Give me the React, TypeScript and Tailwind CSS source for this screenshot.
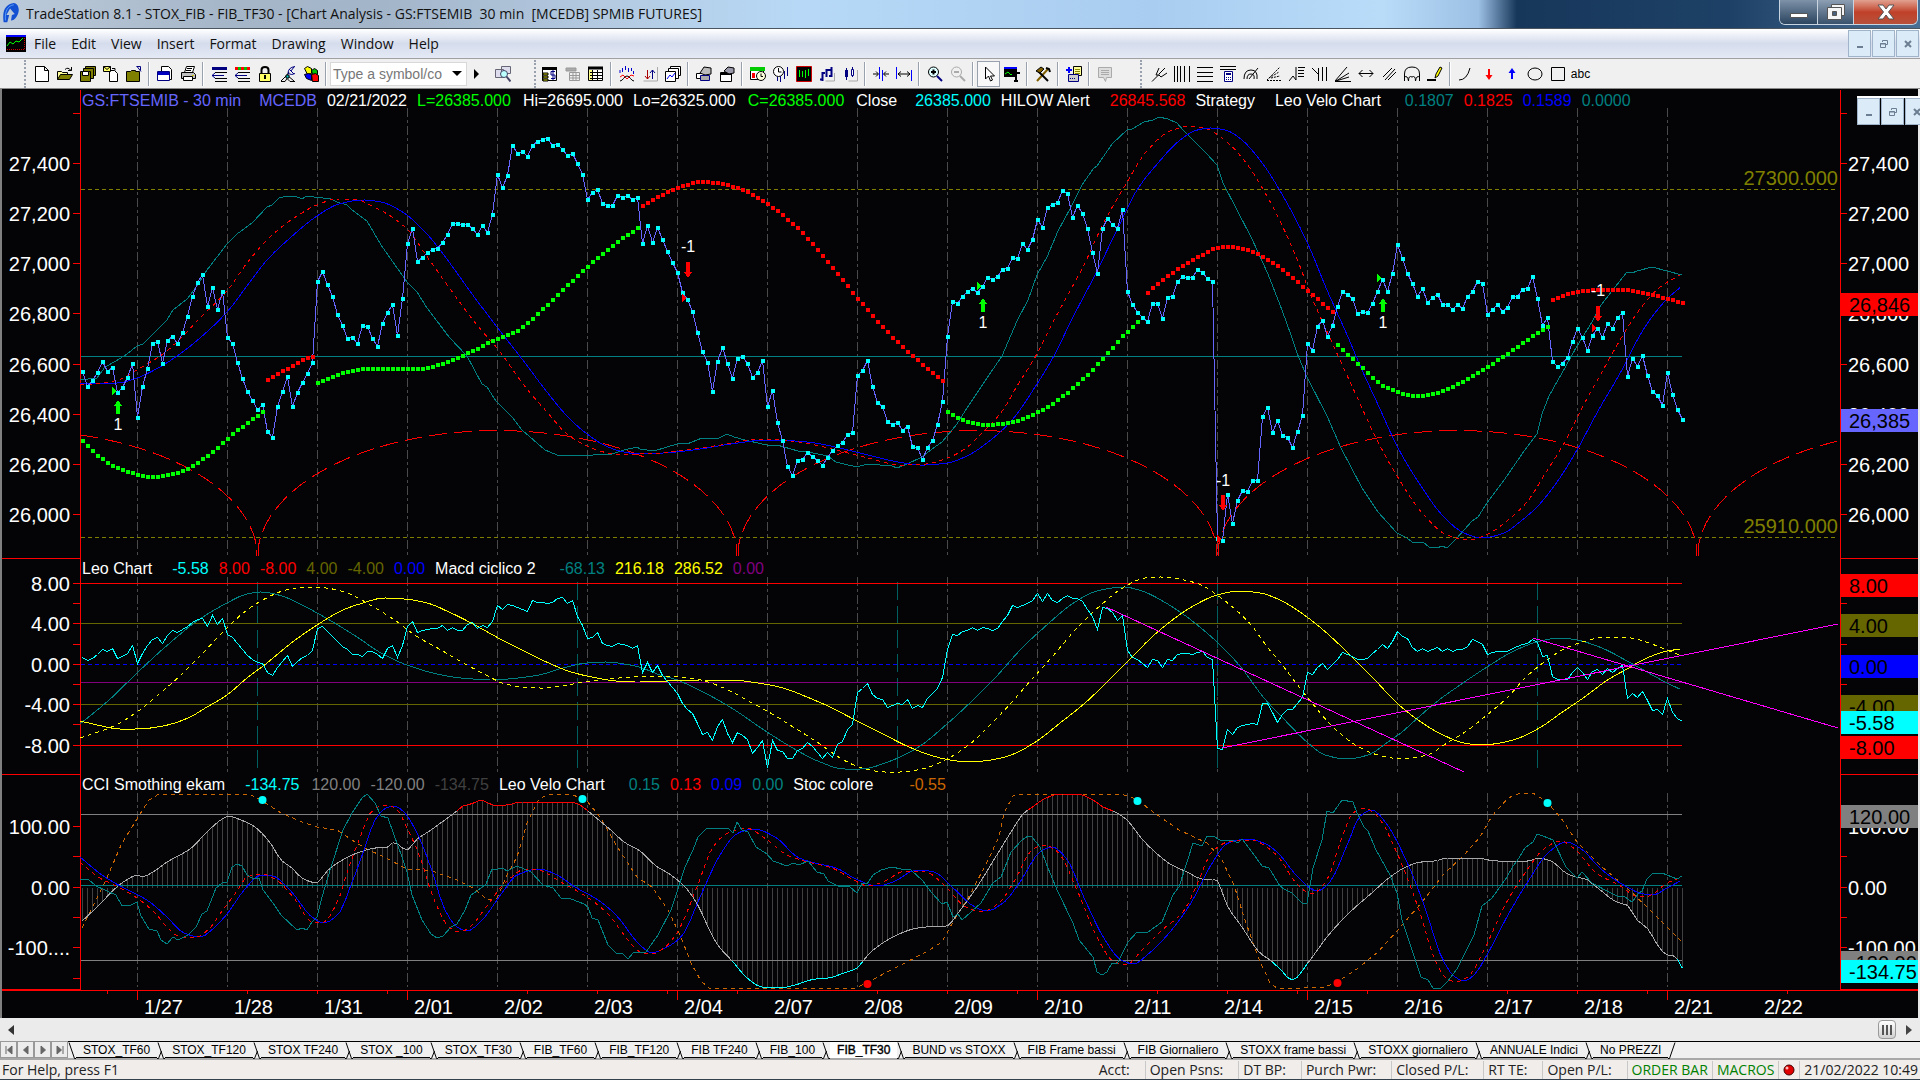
import React from "react";

type Pt = [number, number];

/* ---------- numeric helpers ---------- */

const FIRST_X = 82.5;
const STEP = 5;

const pairs = (flat: number[]): Pt[] => {
  const out: Pt[] = [];
  for (let i = 0; i + 1 < flat.length; i += 2) out.push([flat[i], flat[i + 1]]);
  return out;
};

const toPath = (pts: Pt[]) => "M" + pts.map(([x, y]) => `${x.toFixed(1)},${y.toFixed(1)}`).join("L");

const barPath = (ys: number[]) => toPath(ys.map((y, i) => [FIRST_X + i * STEP, y + 0.5] as Pt));

/* Monotone cubic interpolation through knots, sampled every `step` pixels. */
const sample = (flat: number[], step = STEP, start?: number): Pt[] => {
  const p = pairs(flat);
  const n = p.length;
  const d: number[] = [];
  for (let i = 0; i < n - 1; i++) d.push((p[i + 1][1] - p[i][1]) / (p[i + 1][0] - p[i][0]));
  const m: number[] = [d[0]];
  for (let i = 1; i < n - 1; i++) m.push(d[i - 1] * d[i] <= 0 ? 0 : (2 * d[i - 1] * d[i]) / (d[i - 1] + d[i]));
  m.push(d[n - 2]);
  const out: Pt[] = [];
  let k = 0;
  for (let x = start ?? p[0][0]; x <= p[n - 1][0] + 0.01; x += step) {
    while (k < n - 2 && x > p[k + 1][0]) k++;
    const h = p[k + 1][0] - p[k][0];
    const t = (x - p[k][0]) / h;
    const t2 = t * t;
    const t3 = t2 * t;
    out.push([
      x,
      (2 * t3 - 3 * t2 + 1) * p[k][1] + (t3 - 2 * t2 + t) * h * m[k] + (-2 * t3 + 3 * t2) * p[k + 1][1] + (t3 - t2) * h * m[k + 1],
    ]);
  }
  return out;
};

/* ---------- series ---------- */

const price = [
  371,386,380,372,361,371,367,392,387,377,363,417,386,368,343,341,363,340,336,343,332,316,296,282,274,306,287,309,291,337,
  343,362,378,391,400,409,404,431,437,406,391,376,406,392,382,373,362,281,271,284,296,314,325,338,337,343,325,326,338,346,
  323,312,304,335,298,243,228,261,257,252,249,248,242,234,223,223,224,224,228,234,225,232,214,174,187,175,145,153,151,156,
  145,141,139,138,145,144,149,155,153,163,174,199,192,189,203,205,205,195,197,195,199,197,243,225,242,227,239,251,262,272,
  292,299,311,332,351,362,391,361,347,363,378,358,356,363,377,372,360,406,390,422,440,466,475,460,459,452,456,460,465,457,
  450,445,442,434,432,375,370,360,386,402,406,421,424,422,430,426,446,447,459,447,440,424,401,336,301,303,296,291,288,292,
  286,277,279,276,269,268,257,258,243,249,239,219,227,207,204,202,190,193,217,205,213,228,252,273,228,218,224,228,209,291,
  304,312,317,321,303,303,318,297,296,281,276,277,277,269,272,278,281,538,540,494,523,500,490,491,480,480,416,407,432,420,
  435,437,447,431,415,343,350,326,320,336,325,306,291,294,298,313,311,312,303,291,279,291,273,244,258,273,283,296,288,302,
  297,294,304,304,309,304,308,296,291,281,283,314,309,304,311,307,296,296,289,288,276,298,325,317,361,366,363,357,341,328,
  337,350,335,328,337,323,328,317,312,376,358,366,355,375,391,395,405,372,394,409,419,
];

const leo = [
  657,660,658,654,649,651,648,658,656,653,645,663,653,645,639,637,643,635,630,632,629,626,622,619,618,626,615,624,618,634,
  637,643,649,655,659,662,663,672,675,667,661,655,666,661,657,655,650,628,626,631,636,641,646,649,654,654,656,651,651,654,
  658,648,645,657,645,626,621,632,630,629,628,628,625,630,627,630,630,624,622,628,625,627,621,605,609,604,605,607,609,611,
  600,602,602,603,602,598,597,603,600,616,625,638,637,632,643,645,646,643,644,645,648,645,672,662,672,665,675,681,687,693,
  703,709,713,723,734,732,740,726,719,733,742,732,735,739,753,747,740,767,740,750,751,758,758,750,748,742,746,752,758,752,
  757,744,741,729,724,692,688,683,694,698,699,707,705,703,704,699,708,705,707,698,693,688,677,649,634,635,631,630,627,630,
  627,628,630,628,621,615,605,607,605,603,600,593,601,593,600,602,598,595,598,598,601,609,616,629,607,608,612,620,615,650,
  657,659,663,667,659,660,667,659,660,654,653,653,654,652,651,657,659,748,749,729,734,727,725,724,723,724,703,703,712,722,
  714,709,709,703,697,672,674,667,663,669,664,659,652,654,656,659,659,658,653,649,644,648,641,631,636,638,647,651,648,651,
  649,647,651,648,651,649,649,646,639,641,644,654,652,651,651,651,648,646,644,643,639,642,656,655,676,679,679,679,672,667,
  672,679,671,669,674,668,672,668,665,698,693,697,691,700,710,709,714,698,712,718,721,
];

const hilow: { color: string; start: number; knots: number[] }[] = [
  { color: "#00ff00", start: 82.5, knots: [82,441,102,459,122,470,152,477,177,473,197,463,217,448,227,439,242,427,263,412] },
  { color: "#ff0000", start: 267.5, knots: [267,380,287,369,312,357,313,357] },
  { color: "#00ff00", start: 317.5, knots: [317,383,347,372,367,369,417,369,442,364,462,356,497,339,517,331,547,305,587,267,612,246,638,228] },
  { color: "#ff0000", start: 642.5, knots: [642,206,662,195,677,188,702,182,717,183,737,188,767,204,797,228,827,261,857,298,892,337,917,360,943,381] },
  { color: "#00ff00", start: 947.5, knots: [947,412,962,420,987,425,1012,422,1042,410,1067,393,1087,375,1107,354,1122,337,1138,322] },
  { color: "#ff0000", start: 1147.5, knots: [1147,293,1172,273,1202,255,1217,248,1232,247,1247,250,1277,266,1297,282,1317,299,1333,312] },
  { color: "#00ff00", start: 1337.5, knots: [1337,345,1362,368,1387,388,1417,396,1437,393,1462,382,1487,367,1507,354,1527,340,1548,327] },
  { color: "#ff0000", start: 1552.5, knots: [1552,300,1572,293,1597,290,1622,290,1647,294,1667,299,1683,303] },
];

const veloTeal = [
  80,380,97,378,105,367,116,361,127,354,137,346,143,344,152,335,167,320,173,310,187,299,197,286,207,270,227,244,237,234,252,223,
  267,207,272,205,279,198,287,196,295,196,302,199,307,196,314,197,331,199,337,202,347,205,352,210,367,221,381,245,407,282,417,292,
  427,308,437,321,449,337,467,356,482,384,487,387,496,401,512,417,522,430,545,450,557,455,567,456,576,455,587,456,600,454,612,454,
  624,450,637,447,640,449,654,451,677,444,682,443,687,444,702,438,717,439,727,434,734,437,745,440,762,444,772,446,777,445,798,451,
  808,452,818,454,828,456,836,462,844,464,857,467,867,464,892,466,897,468,907,464,922,457,932,449,942,442,957,424,967,408,987,378,
  1002,356,1017,321,1028,300,1037,275,1047,257,1058,231,1070,209,1077,195,1082,185,1093,169,1097,166,1112,144,1127,130,1132,129,
  1144,122,1153,120,1159,117,1168,119,1177,123,1183,130,1197,144,1207,154,1217,165,1223,183,1236,208,1252,239,1268,274,1282,310,
  1291,335,1297,353,1307,377,1327,416,1341,448,1362,488,1378,512,1397,533,1407,538,1412,542,1423,542,1429,547,1437,548,1442,546,
  1447,548,1456,539,1472,521,1478,517,1487,503,1507,476,1522,454,1537,434,1542,414,1549,396,1566,366,1577,346,1587,330,1592,322,
  1601,305,1612,291,1627,272,1632,273,1637,271,1652,267,1667,271,1682,275,
];
const veloRed = [
  80,385,102,383,118,380,135,371,163,354,180,339,197,321,227,291,247,263,269,238,294,218,317,205,337,199,355,199,372,206,392,217,
  408,230,428,258,453,293,477,325,497,348,527,389,547,412,567,434,587,446,608,453,628,455,639,454,660,453,685,450,721,445,742,441,
  762,439,791,441,815,445,840,451,868,458,901,465,926,464,950,457,966,448,987,428,1003,410,1017,386,1037,354,1054,320,1064,302,
  1085,263,1103,224,1126,184,1146,152,1170,131,1191,126,1207,129,1227,142,1247,164,1264,191,1279,219,1297,259,1312,298,1330,338,
  1357,397,1376,438,1397,476,1423,514,1447,535,1468,540,1488,534,1508,520,1527,502,1545,474,1566,440,1582,408,1602,372,1623,335,
  1643,305,1660,287,1682,274,
];
const veloBlue = [
  80,383,98,384,118,383,137,378,158,368,177,356,200,338,227,312,247,286,267,260,290,238,317,216,339,204,363,200,381,202,404,213,
  427,234,449,262,472,294,497,327,522,359,547,392,567,416,587,434,608,447,624,452,639,454,664,453,693,450,738,443,766,440,795,441,
  815,443,848,450,868,455,893,461,922,465,947,463,967,456,987,443,1012,420,1037,384,1055,354,1071,321,1095,275,1117,230,1137,190,
  1158,163,1179,141,1197,130,1212,128,1228,131,1242,140,1260,160,1279,189,1307,242,1327,290,1348,337,1362,370,1380,409,1397,446,
  1419,483,1443,516,1464,533,1482,538,1504,533,1521,521,1537,507,1557,482,1577,450,1598,411,1623,368,1635,344,1649,321,1667,299,1682,286,
];

const macdTeal = [
  80,724,108,701,137,673,163,649,197,621,227,603,247,594,262,592,282,596,302,605,326,618,357,637,381,653,407,665,437,674,461,678,
  492,680,518,678,539,675,563,668,587,663,608,662,624,664,639,667,660,675,677,680,701,691,730,707,767,732,798,751,820,762,844,769,
  862,769,885,763,917,748,947,724,975,698,995,678,1022,648,1048,624,1072,604,1097,591,1124,587,1142,591,1166,603,1191,620,1217,642,
  1240,666,1264,698,1280,715,1307,742,1325,755,1347,759,1368,755,1388,742,1402,732,1421,715,1439,700,1460,685,1487,667,1512,652,
  1537,642,1560,638,1577,640,1602,648,1627,661,1647,672,1667,683,1682,690,
];
const macdYellow = [
  80,721,102,726,118,729,137,729,163,726,188,718,207,707,227,695,247,678,267,663,290,644,317,625,343,610,363,603,384,598,404,599,
  427,603,449,612,473,624,502,640,530,654,551,664,571,672,592,677,616,681,637,682,668,681,701,680,730,680,758,683,783,688,807,697,
  832,708,857,721,885,735,909,747,930,755,950,760,970,762,991,760,1011,755,1037,741,1060,723,1085,703,1107,682,1130,659,1152,637,
  1175,618,1195,605,1217,595,1240,591,1260,593,1280,600,1307,617,1329,635,1347,652,1374,679,1398,704,1421,722,1443,735,1464,743,
  1482,745,1500,743,1519,738,1541,727,1561,713,1586,696,1606,681,1627,669,1647,658,1667,651,1682,649,
];
const macdDash = [
  80,738,98,732,114,726,137,712,158,695,180,676,200,656,222,633,242,614,261,601,286,590,307,587,326,588,347,593,372,606,396,621,
  416,636,441,650,465,664,490,677,502,683,522,687,543,688,567,685,584,682,608,679,632,677,660,676,681,677,701,680,726,689,750,702,
  767,711,798,730,820,744,840,758,862,768,885,772,901,772,926,768,947,759,970,744,991,724,1011,703,1032,679,1052,657,1077,628,
  1101,605,1121,589,1145,578,1162,577,1179,579,1199,584,1217,595,1236,610,1252,626,1268,648,1280,662,1296,683,1312,703,1333,727,
  1357,746,1378,755,1402,759,1427,755,1447,743,1468,730,1487,715,1508,697,1527,676,1547,660,1566,648,1586,641,1606,637,1631,638,
  1649,643,1667,650,1682,656,
];

const cci = [
  80,923,98,906,118,886,128,879,137,875,142,877,153,872,167,862,190,849,207,832,222,819,228,816,241,820,255,827,271,844,281,860,
  292,868,302,878,317,883,326,872,339,862,357,853,375,848,388,847,394,842,404,849,407,850,417,839,428,832,442,822,457,811,463,806,
  471,804,482,800,490,804,497,806,512,804,520,802,571,802,580,805,588,811,600,821,612,831,624,842,640,851,656,866,668,873,685,887,
  699,907,707,925,717,944,734,963,746,977,762,987,779,988,795,985,815,979,828,978,844,973,857,968,867,956,877,947,893,937,913,929,
  926,927,947,926,958,913,977,887,995,858,1011,832,1024,813,1034,806,1042,800,1060,794,1077,794,1093,800,1103,807,1113,811,1126,819,
  1142,839,1155,852,1170,864,1187,872,1202,879,1217,880,1222,892,1228,907,1242,927,1260,953,1270,960,1280,969,1292,980,1310,960,
  1327,937,1347,915,1374,891,1390,877,1408,866,1421,862,1435,861,1447,858,1476,858,1496,861,1529,861,1538,858,1551,861,1566,873,
  1576,877,1586,879,1594,885,1619,903,1627,905,1637,920,1647,928,1659,947,1667,955,1673,955,1683,969,
];
const stoc = [
  82,928,90,912,106,880,122,843,137,819,149,800,159,794,249,794,261,800,281,813,302,822,317,827,337,830,355,842,367,849,384,857,
  407,869,432,871,457,880,473,888,488,900,497,898,506,877,517,857,527,823,539,799,549,794,571,794,587,801,600,817,616,845,637,877,
  652,887,668,910,681,937,691,963,701,981,709,988,856,988,868,982,893,969,926,952,942,942,954,920,970,895,987,862,999,837,1004,813,
  1013,796,1019,794,1121,794,1136,799,1156,814,1179,830,1207,843,1221,858,1234,885,1244,917,1258,957,1270,983,1277,988,1304,988,
  1325,987,1337,982,1357,969,1378,952,1397,931,1423,901,1443,875,1464,855,1480,837,1492,816,1508,798,1521,793,1533,793,1547,802,
  1561,818,1577,842,1602,867,1627,888,1647,907,1667,927,1682,942,
];
const fastTeal = [
  80,880,88,879,96,886,116,895,122,906,131,905,137,902,141,916,149,929,157,931,161,940,167,944,173,937,178,940,188,935,196,927,
  202,914,207,911,216,888,222,883,227,882,232,867,237,864,242,866,247,875,252,878,259,878,263,890,273,903,281,915,297,930,302,928,
  307,930,312,922,317,917,322,897,331,867,343,830,352,813,362,798,367,794,375,803,381,816,388,818,394,835,402,857,407,872,412,895,
  422,920,431,934,437,938,443,936,451,927,457,924,465,910,471,895,477,891,486,884,492,869,498,869,503,868,507,871,517,866,531,872,
  543,885,553,888,561,898,571,899,584,904,588,907,592,918,598,920,608,945,616,953,622,953,628,959,633,953,646,952,658,935,671,910,
  677,892,685,867,693,850,698,837,707,828,728,828,733,833,737,822,742,830,748,832,756,847,767,854,773,861,787,866,793,863,799,865,
  808,861,817,872,824,874,828,881,838,886,850,887,857,893,862,883,867,884,873,875,881,870,892,867,901,869,911,870,922,880,932,893,
  942,904,947,902,953,917,958,914,962,920,971,912,981,903,993,883,1001,877,1011,852,1022,840,1028,836,1032,837,1040,847,1048,868,
  1058,892,1073,923,1079,940,1093,957,1097,972,1102,975,1107,972,1112,963,1117,964,1128,942,1137,932,1148,932,1162,922,1173,895,
  1179,887,1187,862,1193,843,1202,846,1207,836,1213,836,1220,840,1232,840,1238,843,1242,839,1252,852,1262,866,1269,868,1280,886,
  1284,889,1292,893,1302,903,1307,903,1313,868,1322,840,1327,811,1333,813,1342,800,1353,802,1357,813,1364,827,1368,831,1376,850,
  1390,875,1397,893,1402,920,1413,953,1421,977,1428,980,1433,988,1441,988,1447,982,1457,969,1474,935,1482,906,1492,898,1507,877,
  1513,866,1517,861,1525,848,1533,842,1537,834,1543,836,1553,840,1566,867,1577,878,1582,872,1592,883,1609,892,1619,897,1624,896,
  1632,902,1639,893,1642,891,1647,879,1652,874,1662,873,1677,879,1682,876,
];
const fastRed = [
  80,862,98,877,118,887,137,898,155,913,167,927,180,937,194,938,208,930,222,911,237,891,247,877,263,874,275,879,294,898,312,922,
  322,923,337,903,347,873,359,840,372,811,384,805,396,808,407,828,420,857,433,897,449,927,459,932,469,928,486,907,506,882,526,869,
  539,870,559,881,587,897,608,914,628,940,640,952,652,954,664,948,677,933,697,887,713,847,728,833,746,828,766,839,787,855,808,862,
  832,868,852,879,868,886,885,881,905,871,926,872,942,883,966,907,981,912,999,903,1015,880,1032,850,1044,845,1058,852,1077,890,
  1097,937,1113,961,1126,965,1142,950,1162,930,1183,912,1199,880,1211,853,1228,842,1252,840,1268,848,1280,859,1296,883,1312,894,
  1327,880,1341,840,1353,813,1364,808,1378,817,1397,853,1418,907,1435,960,1445,977,1455,982,1468,977,1484,950,1504,907,1525,873,
  1545,848,1561,841,1577,851,1596,873,1619,885,1639,897,1649,896,1667,883,1682,877,
];
const fastBlue = [
  80,857,102,875,122,887,147,900,167,917,184,933,200,937,214,928,227,914,245,889,261,875,273,876,290,890,312,917,324,923,339,913,
  351,885,363,853,375,820,386,808,394,806,404,812,417,833,431,868,445,910,457,927,467,931,482,920,502,893,517,875,539,869,555,874,
  575,887,598,900,616,915,640,945,652,953,661,950,681,937,701,895,720,855,738,833,754,829,775,837,799,858,815,863,836,868,856,879,
  877,886,893,882,917,870,934,872,952,887,975,907,987,911,1003,903,1020,882,1040,852,1052,847,1066,858,1085,900,1105,940,1121,960,
  1134,964,1146,956,1170,932,1191,903,1211,865,1228,843,1248,839,1266,844,1280,855,1296,875,1317,891,1329,883,1348,843,1360,816,
  1372,810,1386,823,1406,860,1423,902,1443,960,1455,977,1464,981,1474,975,1488,953,1508,915,1527,883,1549,852,1566,842,1580,848,
  1602,870,1627,887,1643,894,1653,895,1667,888,1682,880,
];

/* ---------- plot pieces ---------- */

const dayLines = Array.from({ length: 18 }, (_, i) => 137.5 + i * 90).filter((x) => x < 1700);
const cycleLines = [257.5, 577.5, 897.5, 1217.5, 1537.5];

const Line = ({ d, color, dash, width = 1 }: { d: string; color: string; dash?: string; width?: number }) => (
  <path d={d} fill="none" stroke={color} strokeWidth={width} strokeDasharray={dash} />
);

const Days = ({ y1, y2 }: { y1: number; y2: number }) => (
  <g stroke="#4a4a4a" strokeDasharray="9 3 3 3">
    {dayLines.map((x) => (
      <line key={x} x1={x} x2={x} y1={y1} y2={y2} />
    ))}
  </g>
);

const Dots = ({ pts, color }: { pts: Pt[]; color: string }) => (
  <path d={pts.map(([x, y]) => `M${Math.round(x - 2)},${Math.round(y - 2)}h4v4h-4z`).join("")} fill={color} />
);

const Signal = ({ x, y, dir, label, labelY, tx, ty }: { x: number; y: number; dir: "up" | "down"; label: string; labelY: number; tx: number; ty: number }) => {
  const c = dir === "up" ? "#00ff00" : "#ff0000";
  const up = `M${x} ${y}l4 6h-2v8h-4v-8h-2z`;
  const down = `M${x} ${y + 16}l-4 -6h2v-10h4v10h2z`;
  return (
    <g>
      <path d={dir === "up" ? up : down} fill={c} />
      <path d={`M${tx - 2} ${ty - 4}l5 4l-5 4z`} fill={c} />
      <text x={x} y={labelY} textAnchor="middle" fill="#fff" fontSize="16">{label}</text>
    </g>
  );
};

const Level = ({ y, color, x2 = 1682, dash }: { y: number; color: string; x2?: number; dash?: string }) => (
  <line x1="81" x2={x2} y1={y} y2={y} stroke={color} strokeDasharray={dash} />
);

function PricePlot() {
  return (
    <>
      <Days y1={108} y2={555} />
      <Level y={189.5} color="#808000" x2={1836} dash="4 3" />
      <Level y={537.5} color="#808000" x2={1836} dash="4 3" />
      <Level y={356.5} color="#008080" />
      <path
        d="M80 435A240 127 0 0 1 256.5 546V556M258.5 556V546A240 127 0 0 1 736.5 546V556M738.5 556V546A240 127 0 0 1 1216.5 546V556M1218.5 556V546A240 127 0 0 1 1696.5 546V556M1698.5 556V546A240 127 0 0 1 1838 441"
        fill="none" stroke="#ff0000" strokeDasharray="18 7"
      />
      <Line d={toPath(pairs(veloTeal))} color="#008080" />
      <Line d={toPath(sample(veloBlue))} color="#0000ff" />
      <Line d={toPath(sample(veloRed))} color="#ff0000" dash="4 4" />
      <Line d={barPath(price)} color="#6666ff" />
      {hilow.map((h) => (
        <Dots key={h.start} color={h.color} pts={sample(h.knots, STEP, h.start)} />
      ))}
      <Dots color="#00ffff" pts={price.map((y, i) => [FIRST_X + i * STEP, y + 0.5] as Pt)} />
      <Signal x={118} y={400} dir="up" label="1" labelY={430} tx={114} ty={391} />
      <Signal x={688} y={262} dir="down" label="-1" labelY={252} tx={684} ty={298} />
      <Signal x={983} y={298} dir="up" label="1" labelY={328} tx={979} ty={286} />
      <Signal x={1223} y={495} dir="down" label="-1" labelY={486} tx={1219} ty={539} />
      <Signal x={1383} y={298} dir="up" label="1" labelY={328} tx={1379} ty={278} />
      <Signal x={1598} y={306} dir="down" label="-1" labelY={296} tx={1594} ty={328} />
      <g fill="#808000" fontSize="20" textAnchor="end">
        <text x="1838" y="185">27300.000</text>
        <text x="1838" y="533">25910.000</text>
      </g>
    </>
  );
}

function LeoPlot() {
  return (
    <>
      <Days y1={577} y2={772} />
      <g stroke="#006060" strokeDasharray="18 6">
        {cycleLines.map((x) => (
          <line key={x} x1={x} x2={x} y1="582" y2="768" />
        ))}
      </g>
      <Level y={583.5} color="#ff0000" />
      <Level y={623.5} color="#666600" />
      <Level y={664.5} color="#0000ff" dash="4 3" />
      <Level y={682.5} color="#800080" />
      <Level y={704.5} color="#666600" />
      <Level y={745.5} color="#ff0000" />
      <Line d={toPath(sample(macdTeal))} color="#008080" />
      <Line d={toPath(sample(macdYellow))} color="#ffff00" />
      <Line d={toPath(sample(macdDash))} color="#ffff00" dash="4 4" />
      <Line d={barPath(leo)} color="#00ffff" />
      <path d="M1106 607L1464 772M1222 748L1838 624M1533 638L1838 728" fill="none" stroke="#ff00ff" />
    </>
  );
}

function CciPlot() {
  const pts = sample(cci, STEP, FIRST_X);
  const part = (test: (y: number) => boolean) =>
    pts
      .slice(1)
      .map((p, i) => (test((p[1] + pts[i][1]) / 2) ? `M${pts[i][0]},${pts[i][1]}L${p[0]},${p[1]}` : ""))
      .join("");
  return (
    <>
      <Days y1={793} y2={987} />
      <path d={pts.map(([x, y]) => `M${x},887.5V${y.toFixed(1)}`).join("")} stroke="#404040" />
      <Level y={814.5} color="#808080" />
      <Level y={960.5} color="#808080" />
      <Level y={885.5} color="#008080" />
      <Line d={toPath(pairs(stoc))} color="#cc6600" dash="4 4" />
      <Line d={part((y) => y > 812 && y < 962)} color="#a8a8a8" />
      <Line d={part((y) => y <= 812)} color="#ff0000" />
      <Line d={part((y) => y >= 962)} color="#00ffff" />
      <Line d={toPath(sample(fastBlue))} color="#0000ff" />
      <Line d={toPath(sample(fastRed))} color="#ff0000" dash="4 4" />
      <Line d={toPath(pairs(fastTeal))} color="#008080" />
      <g fill="#00ffff" shapeRendering="auto">
        <circle cx="262.5" cy="800" r="4" />
        <circle cx="582.5" cy="799" r="4" />
        <circle cx="1137.5" cy="801" r="4" />
        <circle cx="1547.5" cy="803" r="4" />
      </g>
      <g fill="#ff0000" shapeRendering="auto">
        <circle cx="867.5" cy="984" r="4" />
        <circle cx="1337.5" cy="983" r="4" />
      </g>
    </>
  );
}

/* ---------- panels ---------- */

type Legend = { t: string; c: string; gap?: string };
const G = "ml-2.5";
const M = "ml-3";
const W = "ml-5";
const X = "ml-6";

const legends: Legend[][] = [
  [
    { t: "GS:FTSEMIB - 30 min", c: "text-[#6666ff]" },
    { t: "MCEDB", c: "text-[#6666ff]", gap: "ml-4.5" },
    { t: "02/21/2022", c: "text-white", gap: G },
    { t: "L=26385.000", c: "text-[#00ff00]", gap: G },
    { t: "Hi=26695.000", c: "text-white", gap: M },
    { t: "Lo=26325.000", c: "text-white", gap: G },
    { t: "C=26385.000", c: "text-[#00ff00]", gap: M },
    { t: "Close", c: "text-white", gap: M },
    { t: "26385.000", c: "text-[#00ffff]", gap: "ml-4.5" },
    { t: "HILOW Alert", c: "text-white", gap: G },
    { t: "26845.568", c: "text-[#ff0000]", gap: W },
    { t: "Strategy", c: "text-white", gap: G },
    { t: "Leo Velo Chart", c: "text-white", gap: W },
    { t: "0.1807", c: "text-[#008080]", gap: X },
    { t: "0.1825", c: "text-[#ff0000]", gap: G },
    { t: "0.1589", c: "text-[#0000ff]", gap: G },
    { t: "0.0000", c: "text-[#008080]", gap: G },
  ],
  [
    { t: "Leo Chart", c: "text-white" },
    { t: "-5.58", c: "text-[#00ffff]", gap: W },
    { t: "8.00", c: "text-[#ff0000]", gap: G },
    { t: "-8.00", c: "text-[#ff0000]", gap: G },
    { t: "4.00", c: "text-[#666600]", gap: G },
    { t: "-4.00", c: "text-[#666600]", gap: G },
    { t: "0.00", c: "text-[#0000ff]", gap: G },
    { t: "Macd ciclico 2", c: "text-white", gap: G },
    { t: "-68.13", c: "text-[#008080]", gap: X },
    { t: "216.18", c: "text-[#ffff00]", gap: G },
    { t: "286.52", c: "text-[#ffff00]", gap: G },
    { t: "0.00", c: "text-[#800080]", gap: G },
  ],
  [
    { t: "CCI Smothing ekam", c: "text-white" },
    { t: "-134.75", c: "text-[#00ffff]", gap: W },
    { t: "120.00", c: "text-[#808080]", gap: M },
    { t: "-120.00", c: "text-[#808080]", gap: G },
    { t: "-134.75", c: "text-[#404040]", gap: G },
    { t: "Leo Velo Chart", c: "text-white", gap: G },
    { t: "0.15", c: "text-[#008080]", gap: X },
    { t: "0.13", c: "text-[#ff0000]", gap: G },
    { t: "0.09", c: "text-[#0000ff]", gap: G },
    { t: "0.00", c: "text-[#008080]", gap: G },
    { t: "Stoc colore", c: "text-white", gap: G },
    { t: "-0.55", c: "text-[#cc6600]", gap: "ml-9" },
  ],
];

type Tag = { y: number; t: string; bg: string };

const leftLabels: [number, string][][] = [
  [[163, "27,400"], [213, "27,200"], [263, "27,000"], [313, "26,800"], [364, "26,600"], [414, "26,400"], [464, "26,200"], [514, "26,000"]],
  [[583, "8.00"], [623, "4.00"], [664, "0.00"], [704, "-4.00"], [745, "-8.00"]],
  [[826, "100.00"], [887, "0.00"], [947, "-100...."]],
];
const rightLabels: [number, string][][] = [
  leftLabels[0],
  [],
  [[826, "100.00"], [887, "0.00"], [947, "-100.00"]],
];
const ticks = [
  [113, 163, 213, 263, 313, 364, 414, 464, 514],
  [583, 603, 623, 644, 664, 684, 704, 724, 745],
  [826, 856, 887, 917, 947, 978],
];
const tags: Tag[][] = [
  [{ y: 293, t: "26,846", bg: "#ff0000" }, { y: 409, t: "26,385", bg: "#6666ff" }],
  [
    { y: 574, t: "8.00", bg: "#ff0000" },
    { y: 614, t: "4.00", bg: "#666600" },
    { y: 655, t: "0.00", bg: "#0000ff" },
    { y: 695, t: "-4.00", bg: "#666600" },
    { y: 711, t: "-5.58", bg: "#00ffff" },
    { y: 736, t: "-8.00", bg: "#ff0000" },
  ],
  [{ y: 805, t: "120.00", bg: "#808080" }, { y: 951, t: "-120.00", bg: "#808080" }, { y: 960, t: "-134.75", bg: "#00ffff" }],
];

function Panel({ index, top, bottom, size, children }: { index: number; top: number; bottom: number; size: string; children: React.ReactNode }) {
  const h = bottom - top;
  return (
    <section className={`relative flex ${size}`}>
      <svg viewBox={`2 ${top} 79 ${h}`} className="h-full w-[79px] shrink-0" fontSize="20" fill="#fff" shapeRendering="crispEdges">
        {leftLabels[index].map(([y, t]) => (
          <text key={y} x="70" y={y + 8} textAnchor="end">{t}</text>
        ))}
        <path d={ticks[index].map((y) => `M73 ${y + 0.5}H81`).join("") + `M80.5 ${top}V${bottom}M2 ${bottom - 0.5}H81`} stroke="#ff0000" fill="none" />
      </svg>
      <svg viewBox={`81 ${top} 1759 ${h}`} preserveAspectRatio="none" className="h-full min-w-0 flex-1 overflow-visible" fill="none" shapeRendering="crispEdges">
        {children}
      </svg>
      <svg viewBox={`1840 ${top} 78 ${h}`} className="h-full w-[78px] shrink-0" fontSize="20" fill="#fff" shapeRendering="crispEdges">
        {rightLabels[index].map(([y, t]) => (
          <text key={y} x="1848" y={y + 8}>{t}</text>
        ))}
        <path d={ticks[index].map((y) => `M1840 ${y + 0.5}H1847`).join("") + `M1840.5 ${top}V${bottom}M1840 ${bottom - 0.5}H1918`} stroke="#ff0000" fill="none" />
        {tags[index].map((g) => (
          <g key={g.y}>
            <rect x="1841" y={g.y} width="77" height="23" fill={g.bg} />
            <text x="1849" y={g.y + 19} fill="#000">{g.t}</text>
          </g>
        ))}
      </svg>
      <p className={`absolute left-20 top-0 flex items-center whitespace-nowrap text-base ${index === 0 ? "h-[22px]" : "h-5"}`}>
        {legends[index].map((l, i) => (
          <span key={i} className={`${l.c} ${l.gap ?? ""}`}>{l.t}</span>
        ))}
      </p>
    </section>
  );
}

const dates = ["1/27","1/28","1/31","2/01","2/02","2/03","2/04","2/07","2/08","2/09","2/10","2/11","2/14","2/15","2/16","2/17","2/18","2/21","2/22"];

function TimeAxis() {
  return (
    <svg viewBox="2 990 1916 28" preserveAspectRatio="none" className="h-7 w-full shrink-0" fontSize="20" fill="#fff" shapeRendering="crispEdges">
      <path
        d={
          [137.5, 407.5, 677.5, 1037.5, 1307.5, 1667.5].map((x) => `M${x} 990V1000`).join("") +
          [107.5, 247.5, 317.5, 387.5, 527.5, 597.5, 667.5, 737.5, 877.5, 947.5, 1017.5, 1157.5, 1227.5, 1297.5, 1367.5, 1507.5, 1577.5, 1647.5, 1787.5]
            .map((x) => `M${x} 990V994`)
            .join("") +
          "M2 990.5H1918"
        }
        stroke="#ff0000"
      />
      {dates.map((d, i) => (
        <text key={d} x={144 + i * 90} y="1014">{d}</text>
      ))}
    </svg>
  );
}

/* ---------- toolbar ---------- */

const B = "#000";
const N = "#000080";

const icons: Record<string, React.ReactNode> = {
  "New": <path d="M1.5 .5h9l4 4v11h-13zM10.5 .5v4h4" fill="#fff" stroke={B} />,
  "Open": <g stroke={B}><path d="M.5 13.5v-8h4l1 1h5v2" fill="#ffff99" /><path d="M.5 13.5l3-5h12l-3 5z" fill="#808000" /><path d="M8 3.5q3-3 6 1M14.500 1v3.500h-3.500" fill="none" /></g>,
  "Save all": <g stroke={B} fill="#808000"><path d="M5.500.5h10v9h-10z" /><path d="M3.500 2.500h10v10h-10z" /><path d="M.5 5.500h10v10h-10z" /><path d="M2.500 5.500h6v4h-6z" fill="#fff" /></g>,
  "Mail document": <g stroke={B}><path d="M6.500 4.500h5l3 3v8h-8z" fill="#fff" /><path d="M.5.5h7v5h-7z" fill="#ffff66" /><path d="M.5.5l3.500 3 3.500-3M9 2.500h3v2" fill="none" /></g>,
  "Close folder": <g stroke={B}><path d="M.5 15.500v-10h4l1-1h4v1h4v10z" fill="#808000" /><path d="M10.500 .500h4v4M11 .500l4 5" stroke={N} fill="none" /></g>,
  "Print preview": <g><path d="M4.500.5h7l3 3v10h-10z" fill="#fff" stroke={B} /><path d="M.5 5.500h12v9h-12z" fill="#fff" stroke={N} /><path d="M1 6h11v3h-11z" fill="#0000c0" /></g>,
  "Print": <g stroke={B}><path d="M4.500 6.500l2-6h8l-2 6z" fill="#fff" /><path d="M1.500 6.500h12l2 2v4h-14z" fill="#c0c0c0" /><path d="M3.500 10.500h9v4h-9zM7 2.500h5M6 4.500h5" fill="#fff" /><path d="M12 9.500h2" stroke="#cc0" /></g>,
  "Insert bar above": <g><path d="M1 1h15v3h-15z" fill={N} /><path d="M4 6.500h12M4 12.500h12M4 15.500h12" stroke={B} /><path d="M1 9.500h12M4 7l-3 2.500 3 2.500" stroke={N} fill="none" /></g>,
  "Insert bar color": <g><path d="M1 1h15v3h-15z" fill="#f00" /><path d="M4 1h3v3h-3zM10 1h3v3h-3z" fill="#00c000" /><path d="M4 6.500h12M4 12.500h12M4 15.500h12" stroke={B} /><path d="M1 9.500h12M4 7l-3 2.500 3 2.500" stroke={N} fill="none" /></g>,
  "Lock": <g><path d="M4.500 7v-3q0-3 3.500-3t3.500 3v3" fill="none" stroke={B} strokeWidth="2" /><path d="M2.500 7.500h11v8h-11z" fill="#ffff66" stroke={B} /><path d="M7 9h2v4h-2z" fill={B} /></g>,
  "Satellite": <g stroke={B} fill="none"><path d="M1 15.500h4l2-3 3 3h5M1 15l6-6 7 6M9 6l-2 3" /><path d="M15 .5q-7 1-7 7q4 2 7 0M9 3l5 5M11 5l3-4" stroke={N} /><path d="M6 9h3v3h-3z" fill="#0cc" /></g>,
  "Objects": <g stroke={B}><path d="M1.500 2.500l3-2 4 2v5l-4 1z" fill="#ff0" /><path d="M8.500 4.500l3-2 3 2v4h-5z" fill="#00c000" /><path d="M1.500 8.500l4-1 3 1v6l-5-2z" fill="#0000ff" /><path d="M8.500 8.500l4-1 3 2v6h-6z" fill="#ff0000" /></g>,
  "Find symbol": <g><path d="M.5 3.500h8v8h-8zM6.500.5h9v7h-9z" fill="#dde" stroke="#667" /><circle cx="9" cy="8" r="3.500" fill="#bff" stroke="#446" /><path d="M11.500 10.500l4 5" stroke="#446" strokeWidth="2" /></g>,
  "Account": <g><path d="M.5 1.500h14v13h-14z" fill="#fff" stroke={B} /><path d="M0 1h15v3h-15z" fill={B} /><path d="M1 7h5v2h-5zM1 10h5v2h-5zM1 13h5v2h-5z" fill="#cc0" stroke={B} /><path d="M13 5.500h-4v3.500h4v3.500h-4M11 4v10" stroke={N} fill="none" /></g>,
  "Order table": <g fill="none" stroke="#999"><path d="M1 2h10v3h-10z" fill="#aaa" /><path d="M4.500 6.500h10v8h-10zM4 9.500h10M4 12h10M8 6v8M11 6v8" /></g>,
  "Quote table": <g stroke={B} fill="none"><path d="M.5 1.500h14v13h-14z" fill="#fff" /><path d="M0 2h15" strokeWidth="3" /><path d="M1 4h3v10h-3z" fill="#ff8" stroke="none" /><path d="M4.500 4v11M9.500 4v11M2 6.500h12M2 9.500h12M2 12.500h12" /></g>,
  "Study": <g fill="none"><path d="M1 7v-3M3.500 6v-4M6.500 4v-4M9.500 6v-4M12.500 5v-3M14.500 8v-3" stroke="#00c" /><path d="M1 11l3-2 4 4 4-4 3 1" stroke="#f00" /><path d="M1 15c3 0 4-5 7-5s4 5 7 5" stroke={B} /></g>,
  "Sort": <g fill="none"><path d="M15.500 1v14h-14" stroke="#aaa" /><path d="M5.500 4v9M3 10l2.500 3 2.500-3" stroke="#a00" /><path d="M10.500 13v-9M8 7l2.500-3 2.500 3" stroke={N} /></g>,
  "Stack": <g stroke={B} fill="#fff"><path d="M5.500.5h10v9h-10z" /><path d="M3.500 2.500h10v10h-10z" /><path d="M.5 5.500h10v10h-10z" /><path d="M2 13l3-4 2 2 3-4" stroke="#00f" fill="none" /></g>,
  "Format analysis": <g stroke={B} fill="#fff"><path d="M.5 7.500h8v5h-8z" /><path d="M4 7l4-6 7 1v6l-6 1z" fill="#bbb" /><path d="M4.500 9.500h9v5h-9z" stroke={N} fill="#aaa" /></g>,
  "Format symbol": <g stroke={B} fill="#fff"><path d="M1.500 6.500h11v9h-11z" /><path d="M2 7.500h10" strokeWidth="3" stroke={B} /><path d="M5 5l4-4 6 1v5l-5 1z" fill="#99a" /></g>,
  "Sessions": <g><path d="M.5 2.500h13v11h-13z" fill="#fff" stroke={B} /><path d="M0 1h15v4h-15z" fill="#0c0" /><path d="M2 7h3v5h-3z" fill="#f00" /><circle cx="11" cy="10" r="4.500" fill="#ffd" stroke={B} /><path d="M11 7.500v3h2" stroke={B} fill="none" /></g>,
  "Clock bars": <g fill="none" stroke={B}><circle cx="5.500" cy="5.500" r="5" fill="#fff" /><path d="M5.500 2v4h3" /><path d="M4.500 11v4M7.500 10v6M11.500 5v8M14.500 1v9" stroke={N} /></g>,
  "Chart window": <g><path d="M.5.500h15v15h-15z" fill={B} stroke="#c00" /><path d="M3.500 4v7M6.500 5v6M9.500 4v8M12.500 3v7" stroke="#0f0" /></g>,
  "Bar style": <g fill="none" stroke={N}><path d="M3.500 6v9M1 13.500h2M3 7h3M7.500 3v8M7 4h5M12.500 1v10M10 10h3" strokeWidth="2" /><path d="M15.500 7v8h-9" stroke="#aaa" /></g>,
  "Candle style": <g><path d="M4.500 2v12M10.500 1v10" stroke={N} /><path d="M3 4h3v7h-3z" fill={N} /><path d="M9.500 3.500h2v6h-2z" fill="#fff" stroke={N} /><path d="M15.500 4v11h-9" stroke="#aaa" fill="none" /></g>,
  "Less space": <g fill="none"><path d="M6.500 1v12M9.500 4v11" stroke="#00f" /><path d="M0 8h5M3 5.500l2.500 2.500-2.500 2.500M16 8h-5M13 5.500l-2.500 2.500 2.500 2.500" stroke={B} /></g>,
  "More space": <g fill="none"><path d="M.5 1v12M15.500 4v11" stroke="#00f" /><path d="M2 8h12M5 5.500l-3 2.500 3 2.500M11 5.500l3 2.500-3 2.500" stroke={B} /></g>,
  "Zoom in": <g fill="none"><circle cx="6.500" cy="6" r="5" stroke={B} fill="#dff" /><path d="M4 6h5M6.500 3.500v5" stroke={B} strokeWidth="2" /><path d="M10 10l5 5" stroke={N} strokeWidth="2" /></g>,
  "Zoom out": <g fill="none" stroke="#aaa"><circle cx="6.500" cy="6" r="5" /><path d="M4 6h5" strokeWidth="2" /><path d="M10 10l5 5" strokeWidth="2" /></g>,
  "Pointer": <path d="M4.500 1v12l3-3 2 5 2-1-2-4h4z" fill="#fff" stroke={B} />,
  "Text pointer": <g><path d="M0 1h13v10h-13z" fill={B} /><path d="M0 1h13v2h-13z" fill="#00f" /><path d="M1 8l3-2 3 3 3-3" stroke="#0f0" fill="none" /><path d="M8 7h8M12 7v9M10 15h4" stroke={B} strokeWidth="2" /></g>,
  "Tools": <g fill="none"><path d="M2 15L13 3" stroke="#806000" strokeWidth="2" /><path d="M3 5l10 10" stroke={B} strokeWidth="2" /><path d="M1 5l5-4 3 2-4 4z" fill="#806000" stroke={B} /><path d="M11 2l3 1 1 3" stroke={B} strokeWidth="2" /></g>,
  "Add window": <g><path d="M7.500.500h8v9h-8z" fill="#ff9" stroke={B} /><path d="M9 3.500h5M9 5.500h5M9 7.500h5" stroke="#880" /><path d="M2.500 8.500h10v7h-10z" fill="#ccc" stroke={N} /><path d="M4 12.500h6" stroke={N} strokeDasharray="1 1" /><path d="M0 4h6M3 1v6" stroke="#00f" strokeWidth="2" /></g>,
  "Notes": <g fill="none" stroke="#aaa"><path d="M1.500 1.500h13v10h-5l-1 4-2-4h-5z" fill="#ddd" /><path d="M4 4.500h8M4 6.500h8M4 8.500h8" /></g>,
  "Pitchfork": <path d="M1 15.500l7-7M5 9l3-7M5 9h3l2 2 6-4M8 8l6-6" stroke={B} fill="none" />,
  "Vertical lines": <path d="M.5 0v16M3.500 0v16M6.500 0v16M10.500 0v16M15.500 0v16" stroke={B} />,
  "Horizontal lines": <path d="M0 1.500h16M0 6.500h16M0 10.500h16M0 15.500h16" stroke={B} />,
  "Calculator": <g><path d="M0 .5h16M0 3.500h16" stroke={B} /><path d="M4.500 5.500h8v10h-8z" fill="#fff" stroke={N} /><path d="M6 7h5v2h-5z" fill={N} /><path d="M6 11.500h6M6 13.500h6" stroke={N} strokeDasharray="1 1" /></g>,
  "Arc": <path d="M1 13q0-9 7-9t6 9M4 13q0-5 4-5t3 5M6 13L15 2" stroke={B} fill="none" />,
  "Dotted fan": <path d="M1 14.500h14M1 14L14 1M3 12l10-6M5 12l9-2" stroke={B} strokeDasharray="2 1" fill="none" />,
  "Zigzag": <path d="M0 15l4-5 3 4V1M9 1.500h7M9 4.500h6M9 7.500h6M9 10.500h6" stroke={B} fill="none" />,
  "Time lines": <path d="M0 2l6 6M6.500 2v13M10.500 1v14M14.500 1v14" stroke={B} fill="none" />,
  "Fan": <path d="M0 15.500h16M0 15L12 1M1 15l13-8M1 15l13-4" stroke={B} fill="none" />,
  "Extend": <path d="M1 7.500h14M4.500 4l-3.500 3.500 3.500 3.500M11.500 4l3.500 3.500-3.500 3.500" stroke={B} fill="none" />,
  "Parallel": <path d="M2 11l9-9M4 14L14 3M7 14l8-8" stroke={B} fill="none" />,
  "Cycle": <path d="M.5 15v-7q0-7 7.500-7t7.500 7v7M.5 11q3-2 4 4 0-6 3.500-4q3.500-2 3.500 4 1-6 4-4" stroke={B} fill="none" />,
  "Pencil": <g><path d="M8 12l1-4 4-7 2 1-4 8z" fill="#ff0" stroke={B} /><path d="M0 14h9" stroke={B} strokeWidth="2" /></g>,
  "Curve": <path d="M1 14q8 0 11-12" stroke={B} fill="none" />,
  "Down arrow": <path d="M7 3h2v6h2.500l-3.500 5-3.500-5h2.500z" fill="#f00" />,
  "Up arrow": <path d="M7 13h2v-6h2.500l-3.500-5-3.500 5h2.500z" fill="#00f" />,
  "Ellipse": <ellipse cx="8" cy="8" rx="7" ry="6" stroke={B} fill="none" />,
  "Rectangle": <path d="M1.500 1.500h13v13h-13z" stroke={B} fill="none" />,
};

const ToolButton = ({ name, pressed }: { name: string; pressed?: boolean }) => (
  <button aria-label={name} className={`flex h-[26px] w-[23px] shrink-0 items-center ${pressed ? "border border-gray-400 bg-[#f8f8f8] pl-[3px]" : "pl-1"}`}>
    <svg viewBox="0 0 16 16" className="size-4 shrink-0" fill="none">{icons[name]}</svg>
  </button>
);
const Sep = () => <span className="mx-[3px] h-6 w-[2px] shrink-0 border-l border-gray-400 bg-white" />;
const Tools = ({ names }: { names: string[] }) => <>{names.map((n) => <ToolButton key={n} name={n} pressed={n === "Pointer"} />)}</>;
const Grip = () => <span className="h-7 w-1 shrink-0 border-l-2 border-dotted border-gray-400" />;

function Toolbar() {
  return (
    <div className="flex h-[31px] items-center overflow-hidden border-t border-[#a0a0a0] border-b border-b-[#8a8a8a] bg-[#f0f0f0] pl-6">
      <Grip />
      <span className="w-0.5" />
      <Tools names={["New", "Open", "Save all", "Mail document", "Close folder"]} />
      <Sep />
      <Tools names={["Print preview", "Print"]} />
      <Sep />
      <Tools names={["Insert bar above", "Insert bar color", "Lock", "Satellite", "Objects"]} />
      <Sep />
      <div className="flex h-6 w-[137px] shrink-0 items-center border border-[#d8d8d8] bg-white">
        <input aria-label="Symbol or company" placeholder="Type a symbol/co" className="w-[116px] bg-white pl-0.5 text-sm text-black outline-none placeholder:text-[#777]" />
        <button aria-label="Show symbols" className="flex flex-1 justify-center">
          <svg viewBox="0 0 10 5" className="h-[5px] w-2.5"><path d="M0 0h10L5 5z" fill="#000" /></svg>
        </button>
      </div>
      <button aria-label="Go" className="flex h-6 w-[18px] shrink-0 items-center justify-center">
        <svg viewBox="0 0 5 10" className="h-2.5 w-[5px]"><path d="M0 0v10l5-5z" fill="#000" /></svg>
      </button>
      <span className="w-1.5" />
      <Tools names={["Find symbol"]} />
      <span className="w-5" />
      <Grip />
      <Tools names={["Account", "Order table", "Quote table"]} />
      <Sep />
      <Tools names={["Study", "Sort", "Stack"]} />
      <Sep />
      <Tools names={["Format analysis", "Format symbol"]} />
      <Sep />
      <Tools names={["Sessions", "Clock bars", "Chart window", "Bar style", "Candle style"]} />
      <Sep />
      <Tools names={["Less space", "More space"]} />
      <Sep />
      <Tools names={["Zoom in", "Zoom out"]} />
      <Sep />
      <Tools names={["Pointer", "Text pointer"]} />
      <Sep />
      <Tools names={["Tools"]} />
      <Sep />
      <Tools names={["Add window"]} />
      <Sep />
      <Tools names={["Notes"]} />
      <span className="w-6" />
      <Grip />
      <span className="w-[3px]" />
      <Tools names={["Pitchfork", "Vertical lines", "Horizontal lines", "Calculator", "Arc", "Dotted fan", "Zigzag", "Time lines", "Fan", "Extend", "Parallel", "Cycle", "Pencil"]} />
      <Sep />
      <Tools names={["Curve", "Down arrow", "Up arrow", "Ellipse", "Rectangle"]} />
      <button className="h-6 w-[23px] shrink-0 text-xs">abc</button>
    </div>
  );
}

/* ---------- window chrome ---------- */

function MdiButtons({ label }: { label: string }) {
  const cls = "flex h-[27px] w-[23px] items-center justify-center border border-[#9fb4c8] bg-[#dcebf8]";
  return (
    <div className="flex gap-px">
      <button aria-label={`Minimize ${label}`} className={cls}>
        <svg viewBox="0 0 10 10" className="size-2.5"><path d="M2 7h6v2H2z" fill="#6c7f92" /></svg>
      </button>
      <button aria-label={`Restore ${label}`} className={cls}>
        <svg viewBox="0 0 10 10" className="size-2.5" fill="none" stroke="#6c7f92"><path d="M3.500 3V1.500h5v4H7" /><path d="M1.500 4.500h5v4h-5zM1 5h6" /></svg>
      </button>
      <button aria-label={`Close ${label}`} className={cls}>
        <svg viewBox="0 0 10 10" className="size-2.5" fill="none" stroke="#6c7f92" strokeWidth="2"><path d="M2 2l6 6M8 2l-6 6" /></svg>
      </button>
    </div>
  );
}

function TitleBar() {
  return (
    <header className="flex h-[29px] items-start justify-between border-b border-[#4a5560] bg-[linear-gradient(90deg,#bccbdb_0%,#a5b6c8_12%,#a3b5c9_20%,#b4cbe2_32%,#b7d9f7_42%,#a9cdf0_60%,#b9dcf9_72%,#9cc0e4_77%,#17375a_79%,#1d4166_90%,#4a6f95_100%)] pl-0.5">
      <div className="flex h-7 items-center gap-1.5">
        <svg viewBox="0 0 18 26" className="h-6 w-[18px]">
          <path d="M1 22C-1 8 4 2 12 1c6 1 7 9 3 15-2 3-4 4-6 4l1-6 3-1-5-6-4 7 3 0-2 8z" fill="#1450d2" />
          <path d="M3 20C2 9 6 4 12 3" fill="none" stroke="#5aa0ff" />
        </svg>
        <h1 className="whitespace-pre font-['Open_Sans','Noto_Sans',sans-serif] text-sm text-[#111]">
          TradeStation 8.1 - STOX_FIB - FIB_TF30 - [Chart Analysis - GS:FTSEMIB  30 min  [MCEDB] SPMIB FUTURES]
        </h1>
      </div>
      <div className="mr-0.5 flex h-[25px] overflow-hidden rounded-b-md border border-t-0 border-[#c8d4e0]">
        <button aria-label="Minimize" className="flex w-[38px] items-end justify-center border-r border-[#c8d4e0] bg-gradient-to-b from-[#7e92a8] to-[#2c4560] pb-1.5">
          <svg viewBox="0 0 18 5" className="h-[5px] w-[18px]"><path d="M.5.500h17v4h-17z" fill="#fff" stroke="#555" /></svg>
        </button>
        <button aria-label="Restore" className="flex w-9 items-center justify-center border-r border-[#c8d4e0] bg-gradient-to-b from-[#8d9fb3] to-[#3a526c]">
          <svg viewBox="0 0 20 18" className="h-[18px] w-5" fill="#f5f5f5" stroke="#555"><path d="M5.500 1.500h13v11h-13z" /><path d="M1.500 4.500h14v12h-14z" /><path d="M6.500 8.500h4v4h-4z" fill="#4a6078" /></svg>
        </button>
        <button aria-label="Close" className="flex w-[63px] items-center justify-center bg-gradient-to-b from-[#e0a090] via-[#c0412a] to-[#b8503a]">
          <svg viewBox="0 0 18 16" className="h-4 w-[18px]"><path d="M1 1h5l3 4 3-4h5l-5.500 7L17 15h-5l-3-4-3 4H1l5.500-7z" fill="#fff" stroke="#555" /></svg>
        </button>
      </div>
    </header>
  );
}

function MenuBar() {
  return (
    <nav className="flex h-[29px] items-center justify-between bg-gradient-to-b from-white via-[#d5dcec] to-[#e4e9f5] pl-1.5 pr-px">
      <div className="flex items-center font-['Open_Sans','Noto_Sans',sans-serif] text-sm text-[#111]">
        <svg viewBox="0 0 20 17" className="mr-2 h-[17px] w-5">
          <path d="M0 0h20v17H0z" fill="#000" /><path d="M0 0h20v2H0z" fill="#00f" />
          <path d="M1 11l3-4 3 2 3-3 3 1 4-4" fill="none" stroke="#0f0" /><path d="M1 14.500h17M18.500 3v12" stroke="#c00" strokeDasharray="1 1" />
        </svg>
        <ul className="flex gap-[15px]">
          {["File", "Edit", "View", "Insert", "Format", "Drawing", "Window", "Help"].map((m) => (
            <li key={m}><button>{m}</button></li>
          ))}
        </ul>
      </div>
      <MdiButtons label="chart" />
    </nav>
  );
}

const tabNames = ["STOX_TF60","STOX_TF120","STOX TF240","STOX _100","STOX_TF30","FIB_TF60","FIB_TF120","FIB TF240","FIB_100","FIB_TF30","BUND vs STOXX","FIB Frame bassi","FIB Giornaliero","STOXX frame bassi","STOXX giornaliero","ANNUALE Indici","No PREZZI"];

const TabEdge = ({ kind }: { kind: "first" | "mid" | "last" }) => (
  <svg viewBox="0 0 8 17" className="h-[17px] w-2 shrink-0" fill="none" stroke="#000">
    {kind !== "last" && <path d="M1 .5L6.500 16.500H8" />}
    {kind === "mid" && <path d="M4.500 9L1.500 16.500H0" />}
    {kind === "last" && <path d="M7 .5L1.500 16.500H0" />}
  </svg>
);

function Tabs() {
  const nav = ["M3 2v8M9 2v8L4.500 6z", "M8 2v8L3.500 6z", "M4 2v8L8.500 6z", "M3 2v8L7.500 6zM9 2v8"];
  const navNames = ["First workspace", "Previous workspace", "Next workspace", "Last workspace"];
  return (
    <div className="flex h-[19px] items-stretch border-b-2 border-[#a8a8a8] bg-[#f0f0f0]">
      {nav.map((d, i) => (
        <button key={d} aria-label={navNames[i]} className="flex w-[17px] shrink-0 items-center justify-center border border-[#999] bg-[#ececec]">
          <svg viewBox="0 0 12 12" className="size-3" fill="#666" stroke="#666"><path d={d} /></svg>
        </button>
      ))}
      <div role="tablist" className="flex border-t border-black">
        <TabEdge kind="first" />
        {tabNames.map((n, i) => (
          <React.Fragment key={n}>
            <button
              role="tab"
              aria-selected={n === "FIB_TF30"}
              className={`whitespace-nowrap px-[7px] text-xs leading-4 ${n === "FIB_TF30" ? "bg-white [-webkit-text-stroke:0.4px_black]" : "border-b border-black bg-[#f0f0f0]"}`}
            >
              {n}
            </button>
            <TabEdge kind={i === tabNames.length - 1 ? "last" : "mid"} />
          </React.Fragment>
        ))}
      </div>
      <span className="flex-1 border-t border-black" />
    </div>
  );
}

function StatusBar() {
  const items = ["Acct:", "Open Psns:", "DT BP:", "Purch Pwr:", "Closed P/L:", "RT TE:", "Open P/L:"];
  return (
    <footer className="flex h-[19px] items-center justify-between bg-[#f0edeb] px-0.5 font-['Open_Sans','Noto_Sans',sans-serif] text-sm leading-[18px] text-[#222]">
      <span>For Help, press F1</span>
      <div className="flex items-center">
        {items.map((t) => (
          <span key={t} className="whitespace-nowrap border-r border-[#c8c8c8] pl-1 pr-[15px]">{t}</span>
        ))}
        <span className="border-r border-[#c8c8c8] px-1 text-[#008000]">ORDER BAR</span>
        <span className="border-r border-[#c8c8c8] px-1 text-[#008000]">MACROS</span>
        <svg viewBox="0 0 12 12" className="mx-1 size-3"><circle cx="6" cy="6" r="5" fill="#e00000" stroke="#400" /><circle cx="4" cy="4" r="1.500" fill="#fbb" /></svg>
        <span className="border-l border-[#c8c8c8] pl-1">21/02/2022 10:49</span>
      </div>
    </footer>
  );
}

export default function App() {
  return (
    <div className="flex min-h-screen w-full flex-col overflow-hidden bg-[#f0f0f0] font-['Liberation_Sans',Arial,sans-serif] text-black">
      <TitleBar />
      <MenuBar />
      <Toolbar />
      <main className="relative flex flex-col border-l-2 border-r-2 border-l-[#808080] border-r-[#e8e8e8] bg-[#040406] pt-px">
        <Panel index={0} top={90} bottom={559} size="h-[469px]"><PricePlot /></Panel>
        <Panel index={1} top={559} bottom={775} size="h-[216px]"><LeoPlot /></Panel>
        <Panel index={2} top={775} bottom={990} size="h-[215px]"><CciPlot /></Panel>
        <TimeAxis />
        <div className="absolute -right-2.5 top-[7px] border-t-2 border-white">
          <MdiButtons label="workspace" />
        </div>
      </main>
      <div className="flex h-[23px] items-center justify-between bg-[#ebebeb] px-2">
        <button aria-label="Scroll left">
          <svg viewBox="0 0 6 10" className="h-2.5 w-1.5"><path d="M6 0v10L0 5z" fill="#333" /></svg>
        </button>
        <div className="flex items-center gap-2.5">
          <button aria-label="Scroll thumb" className="flex h-[19px] w-[18px] items-center justify-center gap-0.5 rounded-sm border border-[#999] bg-gradient-to-b from-white to-[#d0d0d0]">
            <span className="h-2.5 w-0.5 bg-[#555]" /><span className="h-2.5 w-0.5 bg-[#555]" /><span className="h-2.5 w-0.5 bg-[#555]" />
          </button>
          <button aria-label="Scroll right">
            <svg viewBox="0 0 6 10" className="h-2.5 w-1.5"><path d="M0 0v10l6-5z" fill="#444" /></svg>
          </button>
        </div>
      </div>
      <Tabs />
      <StatusBar />
      <div className="min-h-px flex-1 border-t border-[#33414f] bg-[#dfe6ec]" />
    </div>
  );
}
